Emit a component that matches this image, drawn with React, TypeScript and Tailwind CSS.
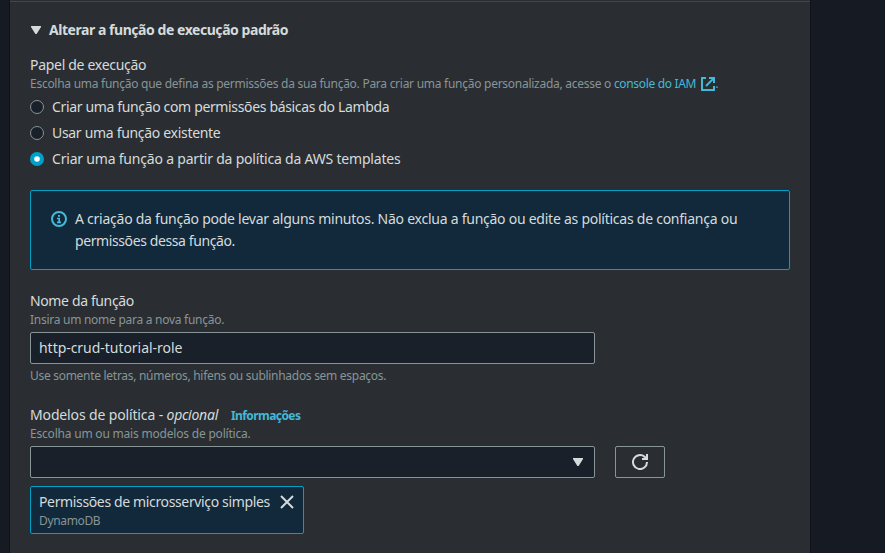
import React from "react";

const hint = "whitespace-nowrap text-[12px] leading-[18px] text-[#879596]";

function Radio({ checked, label, track }: { checked?: boolean; label: string; track: string }) {
  return (
    <label className="flex h-[22px] items-center gap-2">
      <svg className="size-[14px] shrink-0" viewBox="0 0 14 14">
        {checked ? (
          <>
            <circle cx="7" cy="7" r="7" fill="#00a1c9" />
            <circle cx="7" cy="7" r="2.8" fill="#fff" />
          </>
        ) : (
          <circle cx="7" cy="7" r="6.5" fill="#1a2029" stroke="#879596" />
        )}
      </svg>
      <span className={"whitespace-nowrap " + track}>{label}</span>
    </label>
  );
}

function Caret() {
  return (
    <svg className="h-[8px] w-[10px] shrink-0" viewBox="0 0 10 8">
      <path d="M0 0h10v1L5.6 8H4.4L0 1z" fill="#d5dbdb" />
    </svg>
  );
}

export default function App() {
  return (
    <div className="flex h-[553px] w-[885px] overflow-hidden bg-[#161a22] font-['Noto_Sans','Open_Sans',sans-serif] text-[14px] leading-[22px] text-[#d5dbdb]">
      <div className="w-[10px] shrink-0 border-r border-[#0f1216]" />
      <main className="flex w-[800px] shrink-0 flex-col bg-[#2a2e33]">
        <div className="mt-px h-px shrink-0 bg-[#414750]" />
        <div className="flex flex-col px-5 pt-[17px]">
          <h2 className="flex items-center gap-[8px] pl-px font-bold">
            <Caret />
            <span className="whitespace-nowrap tracking-[-0.45px]">Alterar a função de execução padrão</span>
          </h2>

          <section className="mt-[13px]">
            <div className="tracking-[-0.3px]">Papel de execução</div>
            <div className={hint + " -mt-px flex"}>
              <span className="whitespace-pre tracking-[-0.267px]">Escolha uma função que defina as permissões da sua função. Para criar uma função personalizada, acesse o </span>
              <a className="flex items-center gap-[5px] text-[#44b9d6]">
                <span className="tracking-[-0.33px]">console do IAM</span>
                <svg className="size-[14px]" viewBox="0 0 14 14" fill="none" stroke="#44b9d6" strokeWidth="2">
                  <path d="M5 1H1v12h12V9" />
                  <path d="M8 1h5v5M12.6 1.4L5 9" />
                </svg>
              </a>
              <span>.</span>
            </div>
            <div className="mt-[3px] flex flex-col gap-1">
              <Radio label="Criar uma função com permissões básicas do Lambda" track="tracking-[-0.35px]" />
              <Radio label="Usar uma função existente" track="tracking-[-0.31px]" />
              <Radio checked label="Criar uma função a partir da política da AWS templates" track="tracking-[-0.2px]" />
            </div>
          </section>

          <div className="mt-5 flex h-[80px] gap-[8px] rounded-[2px] border border-[#00a1c9] bg-[#12293b] pt-[17px] pl-5">
            <svg className="mt-[3px] size-[16px] shrink-0" viewBox="0 0 16 16" fill="none" stroke="#44b9d6">
              <circle cx="8" cy="8" r="7" strokeWidth="2" />
              <path d="M7 4.9h2M6 7.5h2.2V11M6 11.3h4" strokeWidth="1.7" />
            </svg>
            <p className="whitespace-nowrap">
              <span className="tracking-[-0.25px]">A criação da função pode levar alguns minutos. Não exclua a função ou edite as políticas de confiança ou</span>
              <br />
              <span className="tracking-[-0.4px]">permissões dessa função.</span>
            </p>
          </div>

          <section className="mt-5">
            <div className="tracking-[-0.37px]">Nome da função</div>
            <div className={hint + " -mt-px tracking-[-0.27px]"}>Insira um nome para a nova função.</div>
            <div className="mt-[3px] flex h-[32px] w-[565px] items-center rounded-[2px] border border-[#879596] bg-[#1a2029] px-2">
              <span className="tracking-[-0.04px]">http-crud-tutorial-role</span>
            </div>
            <div className={hint + " mt-[3px] tracking-[-0.29px]"}>Use somente letras, números, hifens ou sublinhados sem espaços.</div>
          </section>

          <section className="mt-[19px]">
            <div className="flex whitespace-nowrap">
              <span className="whitespace-pre tracking-[-0.14px]">Modelos de política - </span>
              <i className="tracking-[-0.25px]">opcional</i>
              <a className="ml-[13px] pt-px text-[12px] leading-[22px] font-bold tracking-[-0.58px] text-[#44b9d6]">Informações</a>
            </div>
            <div className={hint + " -mt-[2px] tracking-[-0.2px]"}>Escolha um ou mais modelos de política.</div>
            <div className="mt-[3px] flex gap-5">
              <div className="flex h-[32px] w-[565px] items-center justify-end rounded-[2px] border border-[#879596] bg-[#1a2029] pr-[11px]">
                <Caret />
              </div>
              <button className="flex h-[32px] w-[50px] items-center justify-center rounded-[2px] border border-[#879596]">
                <svg className="size-[16px]" viewBox="0 0 16 16">
                  <path d="M15 8A7 7 0 1 1 12.6 2.8L14.5 4.8" fill="none" stroke="#d5dbdb" strokeWidth="2" />
                  <path d="M16 0v6h-6V4h4V0z" fill="#d5dbdb" />
                </svg>
              </button>
            </div>
            <div className="mt-2 flex h-[48px] w-[274px] justify-between rounded-[2px] border border-[#00a1c9] bg-[#12293b] pt-[4px] pr-[9px] pl-2">
              <div>
                <div className="whitespace-nowrap tracking-[-0.36px]">Permissões de microsserviço simples</div>
                <div className={hint + " -mt-px tracking-[-0.35px]"}>DynamoDB</div>
              </div>
              <svg className="mt-[4px] size-[14px] shrink-0" viewBox="0 0 14 14" stroke="#d5dbdb" strokeWidth="2">
                <path d="M1 1l12 12M13 1L1 13" />
              </svg>
            </div>
          </section>
        </div>
      </main>
      <div className="flex-1 border-l border-[#0f1216]" />
    </div>
  );
}
